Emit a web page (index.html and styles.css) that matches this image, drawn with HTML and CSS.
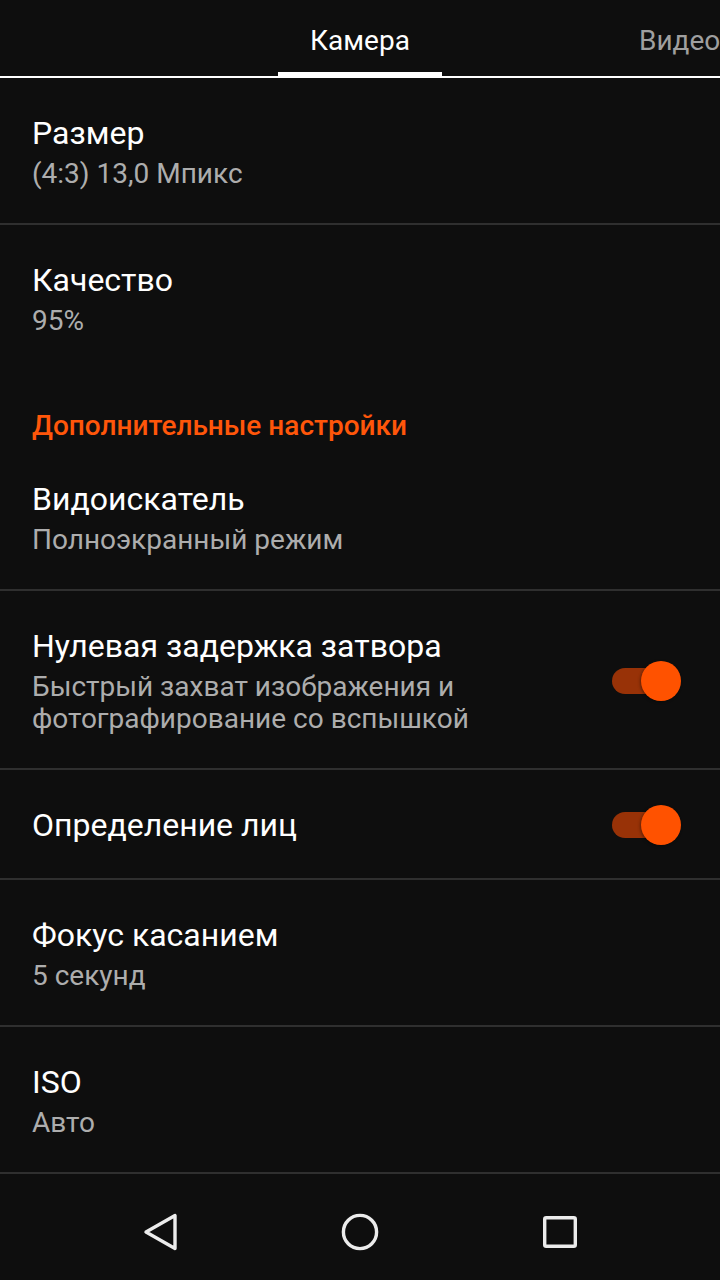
FILE: index.html
```html
<!DOCTYPE html>
<html lang="ru">
<head>
<meta charset="utf-8">
<title>Настройки камеры</title>
<link rel="stylesheet" href="styles.css">
</head>
<body>
<div class="screen">
  <div class="tabs">
    <div class="tab active">Камера</div>
    <div class="tab">Видео</div>
  </div>
  <div class="list">
    <div class="item">
      <div class="text">
        <div class="title">Размер</div>
        <div class="summary">(4:3) 13,0 Мпикс</div>
      </div>
    </div>
    <div class="divider"></div>
    <div class="item">
      <div class="text">
        <div class="title">Качество</div>
        <div class="summary">95%</div>
      </div>
    </div>
    <div class="header">Дополнительные настройки</div>
    <div class="item">
      <div class="text">
        <div class="title">Видоискатель</div>
        <div class="summary">Полноэкранный режим</div>
      </div>
    </div>
    <div class="divider"></div>
    <div class="item">
      <div class="text">
        <div class="title">Нулевая задержка затвора</div>
        <div class="summary">Быстрый захват изображения и<br>фотографирование со вспышкой</div>
      </div>
      <div class="switch"><div class="track"></div><div class="thumb"></div></div>
    </div>
    <div class="divider"></div>
    <div class="item single">
      <div class="text">
        <div class="title">Определение лиц</div>
      </div>
      <div class="switch"><div class="track"></div><div class="thumb"></div></div>
    </div>
    <div class="divider"></div>
    <div class="item">
      <div class="text">
        <div class="title">Фокус касанием</div>
        <div class="summary">5 секунд</div>
      </div>
    </div>
    <div class="divider"></div>
    <div class="item">
      <div class="text">
        <div class="title">ISO</div>
        <div class="summary">Авто</div>
      </div>
    </div>
    <div class="divider"></div>
  </div>
  <div class="navbar">
    <div class="navbtn">
      <svg width="40" height="40" viewBox="0 0 40 40"><path d="M35 3.5 L35 36.5 L6 20 Z" fill="none" stroke="#ececec" stroke-width="3.4" stroke-linejoin="round"/></svg>
    </div>
    <div class="navbtn">
      <svg width="40" height="40" viewBox="0 0 40 40"><circle cx="20" cy="20" r="16.6" fill="none" stroke="#ececec" stroke-width="3.4"/></svg>
    </div>
    <div class="navbtn">
      <svg width="40" height="40" viewBox="0 0 40 40"><rect x="4.7" y="5.7" width="30.6" height="28.6" rx="1.5" fill="none" stroke="#ececec" stroke-width="3.4"/></svg>
    </div>
  </div>
</div>
</body>
</html>
```

FILE: styles.css
```css
html, body {
  margin: 0;
  padding: 0;
  background: #0e0e0e;
}
body {
  font-family: Roboto, "Noto Sans", "Liberation Sans", sans-serif;
  color: #ffffff;
}
.screen {
  width: 720px;
  height: 1280px;
  display: flex;
  flex-direction: column;
  overflow: hidden;
  background: #0e0e0e;
}
.tabs {
  display: flex;
  height: 76px;
  padding-left: 278px;
  gap: 197px;
  border-bottom: 2px solid #ffffff;
  overflow: hidden;
  flex-shrink: 0;
}
.tab {
  box-sizing: border-box;
  height: 76px;
  padding-top: 21px;
  font-size: 28px;
  line-height: 40px;
  color: #9f9f9f;
  white-space: nowrap;
  text-align: center;
  flex-shrink: 0;
}
.tab.active {
  width: 164px;
  color: #ffffff;
  border-bottom: 4px solid #ffffff;
}
.list {
  flex: 1;
  overflow: hidden;
}
.item {
  display: flex;
  align-items: center;
  padding: 35px 0 33px 32px;
}
.item.single {
  padding-bottom: 33px;
}
.text {
  flex: 1;
}
.title {
  font-size: 32px;
  line-height: 40px;
  color: #ffffff;
}
.summary {
  margin-top: 5px;
  font-size: 28px;
  line-height: 32px;
  color: #adadad;
}
.divider {
  height: 2px;
  background: #2f2f2f;
}
.header {
  padding: 37px 32px 0;
  font-size: 28px;
  line-height: 37px;
  font-weight: 500;
  color: #ff560a;
}
.switch {
  position: relative;
  width: 69px;
  height: 40px;
  margin-right: 39px;
  flex-shrink: 0;
}
.track {
  position: absolute;
  left: 0;
  top: 7px;
  width: 62px;
  height: 26px;
  border-radius: 13px;
  background: #983207;
}
.thumb {
  position: absolute;
  right: 0;
  top: 0;
  width: 40px;
  height: 40px;
  border-radius: 50%;
  background: #ff5200;
  box-shadow: -1px 1px 3px rgba(0, 0, 0, 0.35);
}
.navbar {
  height: 96px;
  flex-shrink: 0;
  display: flex;
  justify-content: center;
  align-items: center;
  gap: 160px;
  background: #0e0e0e;
}
.navbtn {
  width: 40px;
  height: 40px;
  display: flex;
  align-items: center;
  justify-content: center;
}
.navbtn svg {
  display: block;
}
```
